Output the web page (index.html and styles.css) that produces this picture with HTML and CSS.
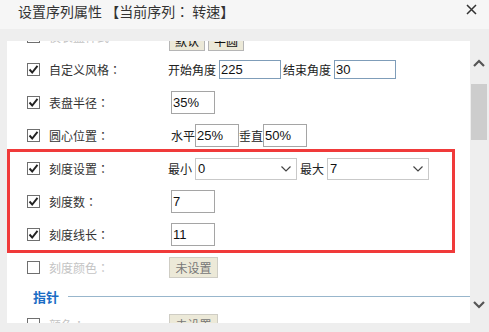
FILE: index.html
```html
<!DOCTYPE html>
<html lang="zh-TW">
<head>
    <meta charset="UTF-8">
    <title>设置序列属性</title>
    <link rel="stylesheet" href="styles.css">
</head>
<body>
    <div class="titlebar">
        <span class="title">设置序列属性 【当前序列： 转速】</span>
        <svg class="close" width="11" height="11" viewBox="0 0 11 11">
            <path d="M1 1L10 10M10 1L1 10" stroke="#333" stroke-width="1.5" fill="none"/>
        </svg>
    </div>

    <div class="main">
        <div class="panel">
            <div class="rows">
                <div class="row">
                    <span class="box"></span>
                    <span class="label off">仪表盘样式：</span>
                    <div class="value shift">
                        <button class="btn">默认</button>
                        <button class="btn">半圆</button>
                    </div>
                </div>

                <div class="row">
                    <span class="box checked"><svg width="11" height="11" viewBox="0 0 11 11"><path d="M1.5 5.5L4.2 8.5L9.5 1.8" stroke="#222" stroke-width="1.9" fill="none"/></svg></span>
                    <span class="label">自定义风格：</span>
                    <div class="value">
                        <span class="txt">开始角度</span>
                        <input class="inp wide" type="text" value="225">
                        <span class="txt">结束角度</span>
                        <input class="inp wide" type="text" value="30">
                    </div>
                </div>

                <div class="row">
                    <span class="box checked"><svg width="11" height="11" viewBox="0 0 11 11"><path d="M1.5 5.5L4.2 8.5L9.5 1.8" stroke="#222" stroke-width="1.9" fill="none"/></svg></span>
                    <span class="label">表盘半径：</span>
                    <div class="value pad">
                        <input class="inp" type="text" value="35%">
                    </div>
                </div>

                <div class="row">
                    <span class="box checked"><svg width="11" height="11" viewBox="0 0 11 11"><path d="M1.5 5.5L4.2 8.5L9.5 1.8" stroke="#222" stroke-width="1.9" fill="none"/></svg></span>
                    <span class="label">圆心位置：</span>
                    <div class="value pad">
                        <span class="txt tight">水平</span>
                        <input class="inp" type="text" value="25%">
                        <span class="txt tight">垂直</span>
                        <input class="inp" type="text" value="50%">
                    </div>
                </div>

                <div class="row">
                    <span class="box checked"><svg width="11" height="11" viewBox="0 0 11 11"><path d="M1.5 5.5L4.2 8.5L9.5 1.8" stroke="#222" stroke-width="1.9" fill="none"/></svg></span>
                    <span class="label">刻度设置：</span>
                    <div class="value">
                        <span class="txt">最小</span>
                        <div class="select">
                            <span>0</span>
                            <svg width="10" height="6" viewBox="0 0 10 6"><path d="M0.5 0.5L5 5L9.5 0.5" stroke="#444" stroke-width="1.2" fill="none"/></svg>
                        </div>
                        <span class="txt">最大</span>
                        <div class="select">
                            <span>7</span>
                            <svg width="10" height="6" viewBox="0 0 10 6"><path d="M0.5 0.5L5 5L9.5 0.5" stroke="#444" stroke-width="1.2" fill="none"/></svg>
                        </div>
                    </div>
                </div>

                <div class="row">
                    <span class="box checked"><svg width="11" height="11" viewBox="0 0 11 11"><path d="M1.5 5.5L4.2 8.5L9.5 1.8" stroke="#222" stroke-width="1.9" fill="none"/></svg></span>
                    <span class="label">刻度数：</span>
                    <div class="value pad">
                        <input class="inp" type="text" value="7">
                    </div>
                </div>

                <div class="row">
                    <span class="box checked"><svg width="11" height="11" viewBox="0 0 11 11"><path d="M1.5 5.5L4.2 8.5L9.5 1.8" stroke="#222" stroke-width="1.9" fill="none"/></svg></span>
                    <span class="label">刻度线长：</span>
                    <div class="value pad">
                        <input class="inp" type="text" value="11">
                    </div>
                </div>

                <div class="row">
                    <span class="box"></span>
                    <span class="label off">刻度颜色：</span>
                    <div class="value">
                        <button class="btn off">未设置</button>
                    </div>
                </div>

                <div class="section">
                    <span class="section-name">指针</span>
                    <span class="section-line"></span>
                </div>

                <div class="row">
                    <span class="box"></span>
                    <span class="label off">颜色：</span>
                    <div class="value">
                        <button class="btn off">未设置</button>
                    </div>
                </div>
            </div>

            <div class="mark"></div>
        </div>

        <div class="scrollbar">
            <svg class="arrow up" width="12" height="8" viewBox="0 0 12 8"><path d="M1 7L6 2L11 7" stroke="#555" stroke-width="2.2" fill="none"/></svg>
            <div class="thumb"></div>
            <div class="track"></div>
            <svg class="arrow down" width="12" height="8" viewBox="0 0 12 8"><path d="M1 1L6 6L11 1" stroke="#555" stroke-width="2.2" fill="none"/></svg>
        </div>
    </div>
</body>
</html>
```

FILE: styles.css
```css
body {
    margin: 0;
    padding: 0;
    background-color: #eeeeee;
    font-family: "Noto Sans CJK TC", "Noto Sans CJK SC", "Liberation Sans", sans-serif;
    color: #333;
    width: 489px;
    height: 332px;
    overflow: hidden;
}

.titlebar {
    height: 29px;
    background-color: #f6f6f6;
    display: flex;
    justify-content: space-between;
    align-items: flex-start;
    padding: 3px 12px 0 18px;
    box-sizing: border-box;
}

.title {
    font-size: 14px;
    line-height: 17px;
    color: #333;
}

.close {
    margin-top: 1px;
}

.main {
    display: flex;
    padding: 12px 3px 0 7px;
}

.panel {
    flex: 0 0 463px;
    height: 282px;
    background-color: #fff;
    overflow: hidden;
    position: relative;
}

.rows {
    margin-top: -21px;
}

.row {
    height: 33px;
    display: flex;
    align-items: center;
    font-size: 12px;
}

.box {
    width: 11px;
    height: 11px;
    border: 1px solid #6f6f6f;
    margin-left: 20px;
    display: flex;
    align-items: center;
    justify-content: center;
    background: #fff;
}

.label {
    width: 119px;
    margin-left: 9px;
    color: #333;
}

.label.off {
    color: #c4c4c4;
}

.value {
    display: flex;
    align-items: center;
}

.value.pad {
    padding-left: 3px;
}

.value.shift {
    margin-top: 8px;
}

.txt {
    margin: 0 3px 0 0;
    color: #222;
}

.txt.tight {
    margin: 0;
}

.inp {
    width: 44px;
    height: 23px;
    box-sizing: border-box;
    border: 1px solid #a5a5a5;
    padding: 0 1px;
    margin: 0;
    font-family: "Liberation Sans", Arial, sans-serif;
    font-size: 13px;
    color: #111;
    outline: none;
}

.inp.wide {
    width: 62px;
    height: 19px;
    border-color: #7f9db9;
    margin-right: 2px;
}

.select {
    width: 102px;
    height: 22px;
    box-sizing: border-box;
    border: 1px solid #c9c9c9;
    display: flex;
    align-items: center;
    justify-content: space-between;
    padding: 0 5px 0 2px;
    margin-right: 3px;
    font-family: "Liberation Sans", Arial, sans-serif;
    font-size: 13px;
    color: #111;
}

.btn {
    height: 21px;
    padding: 0 5px;
    margin: 0 2px 0 1px;
    border: 1px solid #b5b5b5;
    background-color: #ece9d8;
    font-family: "Noto Sans CJK TC", "Noto Sans CJK SC", sans-serif;
    font-size: 12px;
    color: #111;
}

.btn.off {
    width: 49px;
    padding: 0 3px;
    color: #777;
    border-color: #cfcdc4;
}

.section {
    height: 24px;
    display: flex;
    align-items: center;
    padding-left: 26px;
}

.section-name {
    font-size: 13px;
    font-weight: bold;
    color: #1a6cc4;
    width: 35px;
}

.section-line {
    flex: 1;
    height: 1px;
    background-color: #98b6cc;
}

.mark {
    position: absolute;
    left: 0;
    top: 108px;
    width: 448px;
    height: 104px;
    box-sizing: border-box;
    border: 3px solid #f03a3a;
}

.scrollbar {
    width: 16px;
    height: 282px;
    margin-left: 1px;
    display: flex;
    flex-direction: column;
    align-items: center;
}

.arrow.up {
    margin-top: 18px;
}

.thumb {
    width: 16px;
    height: 56px;
    margin-top: 17px;
    background-color: #cdcdcd;
}

.track {
    flex: 1;
}

.arrow.down {
    margin-bottom: 14px;
}
```
